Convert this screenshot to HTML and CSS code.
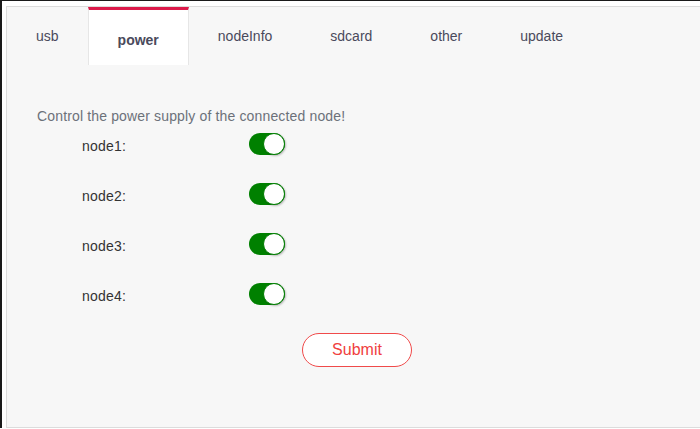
FILE: index.html
```html
<!DOCTYPE html>
<html>
<head>
<meta charset="utf-8">
<link rel="stylesheet" href="styles.css">
</head>
<body>
<div class="frame">
  <div class="panel">
    <div class="tabs">
      <div class="tab">usb</div>
      <div class="tab active">power</div>
      <div class="tab">nodeInfo</div>
      <div class="tab">sdcard</div>
      <div class="tab">other</div>
      <div class="tab">update</div>
    </div>
    <div class="content">
      <p class="desc">Control the power supply of the connected node!</p>
      <div class="row"><span class="label">node1:</span><span class="switch"><span class="knob"></span></span></div>
      <div class="row"><span class="label">node2:</span><span class="switch"><span class="knob"></span></span></div>
      <div class="row"><span class="label">node3:</span><span class="switch"><span class="knob"></span></span></div>
      <div class="row"><span class="label">node4:</span><span class="switch"><span class="knob"></span></span></div>
      <div class="actions"><button class="submit">Submit</button></div>
    </div>
  </div>
</div>
</body>
</html>
```

FILE: styles.css
```css
html, body {
  margin: 0;
  padding: 0;
  background: #ffffff;
  font-family: "Liberation Sans", Arial, sans-serif;
}
.frame {
  border-top: 1px solid #1a1a1a;
  border-left: 2px solid #1a1a1a;
  padding: 5px 0 0 4px;
  height: 428px;
  box-sizing: border-box;
}
.panel {
  border: 1px solid #dcdcdc;
  border-right: none;
  background: #f7f7f7;
  height: 422px;
  box-sizing: border-box;
}
.tabs {
  display: flex;
  align-items: flex-start;
  height: 58px;
}
.tab {
  font-size: 14px;
  line-height: 16px;
  color: #4a4a5c;
  padding: 21px 29px 0;
  white-space: nowrap;
}
.tab.active {
  background: #ffffff;
  border-top: 3px solid #dc1a4a;
  border-left: 1px solid #e6e6e6;
  border-right: 1px solid #e6e6e6;
  height: 58px;
  box-sizing: border-box;
  padding: 22px 29px 0;
  font-weight: bold;
}
.content {
  padding-left: 30px;
}
.desc {
  margin: 43px 0 9px;
  font-size: 14px;
  line-height: 16px;
  color: #6c717a;
  letter-spacing: 0.15px;
}
.row {
  display: flex;
  align-items: center;
  height: 22px;
  margin-bottom: 28px;
  padding-left: 45px;
}
.label {
  width: 167px;
  font-size: 14px;
  color: #333333;
  padding-top: 4px;
  letter-spacing: 0.2px;
}
.switch {
  position: relative;
  width: 36px;
  height: 22px;
  border-radius: 11px;
  background: #008000;
}
.knob {
  position: absolute;
  right: 0;
  top: 0;
  width: 20px;
  height: 20px;
  border-radius: 50%;
  background: #ffffff;
  border: 1px solid #008000;
  box-shadow: 1px 1px 2px rgba(0,0,0,0.25);
}
.actions {
  padding-left: 265px;
}
.submit {
  width: 110px;
  height: 34px;
  border: 1px solid #f04a4a;
  border-radius: 17px;
  background: #ffffff;
  color: #f04040;
  font-family: "Liberation Sans", Arial, sans-serif;
  font-size: 16px;
  padding: 0;
}
```
